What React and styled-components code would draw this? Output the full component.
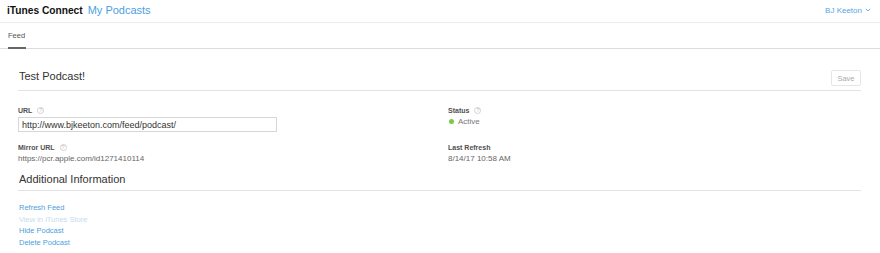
import React from "react";
import styled, { createGlobalStyle } from "styled-components";

const Global = createGlobalStyle`
  html, body { margin: 0; padding: 0; background: #fff; }
  body { font-family: "Liberation Sans", Arial, sans-serif; color: #333; }
  * { box-sizing: border-box; }
`;

const Header = styled.header`
  height: 23px;
  display: flex;
  align-items: center;
  justify-content: space-between;
  padding: 0 9px 2px 7px;
  border-bottom: 1px solid #ececec;
`;

const Brand = styled.div`
  display: flex;
  align-items: baseline;
  gap: 5px;
`;

const BrandName = styled.span`
  font-size: 10.2px;
  font-weight: bold;
  color: #111;
`;

const BrandSection = styled.span`
  font-size: 11px;
  color: #4c9fe0;
`;

const UserMenu = styled.div`
  font-size: 8px;
  color: #5aa4e2;
  display: flex;
  align-items: center;
  gap: 3px;
`;

const Tabs = styled.nav`
  height: 26px;
  display: flex;
  align-items: stretch;
  padding-left: 8px;
  border-bottom: 1px solid #dcdcdc;
`;

const Tab = styled.div`
  font-size: 7.5px;
  color: #555;
  display: flex;
  align-items: center;
  padding: 0 1px 0 0;
  border-bottom: ${(p) => (p.$active ? "2px solid #666" : "none")};
  margin-bottom: -1px;
`;

const Main = styled.main`
  padding: 20px 19px 0 18px;
`;

const SectionHead = styled.div`
  display: flex;
  align-items: flex-end;
  justify-content: space-between;
  border-bottom: 1px solid #e3e3e3;
  height: 22px;
  padding: 0 0 ${(p) => p.$pb}px 1px;
`;

const Title = styled.h2`
  margin: 0;
  font-weight: normal;
  font-size: 11px;
  line-height: 13px;
  color: #333;
`;

const SaveButton = styled.button`
  font-family: inherit;
  font-size: 7.5px;
  color: #aaa;
  background: #fff;
  border: 1px solid #e6e6e6;
  border-radius: 2px;
  width: 30px;
  height: 16px;
  padding: 0;
  align-self: flex-start;
  margin-top: 1px;
`;

const Grid = styled.div`
  display: grid;
  grid-template-columns: 430px 1fr;
  padding-top: 14px;
`;

const Field = styled.div`
  display: flex;
  flex-direction: column;
  height: ${(p) => p.$h}px;
`;

const Label = styled.div`
  font-size: 7px;
  font-weight: bold;
  color: #505050;
  display: flex;
  align-items: center;
  gap: 5px;
  height: 10px;
`;

const Help = styled.span`
  width: 7px;
  height: 7px;
  border-radius: 50%;
  border: 1px solid #d2d2d2;
  color: #bbb;
  font-size: 5px;
  font-weight: normal;
  display: inline-flex;
  align-items: center;
  justify-content: center;
`;

const Input = styled.div`
  width: 259px;
  height: 15px;
  margin-top: 2px;
  border: 1px solid #d6d6d6;
  font-size: 9px;
  color: #333;
  display: flex;
  align-items: center;
  padding-left: 3px;
`;

const Value = styled.div`
  font-size: 8px;
  color: ${(p) => p.$color || "#666"};
  margin-top: 2px;
  display: flex;
  align-items: center;
  gap: 4px;
`;

const Dot = styled.span`
  width: 5px;
  height: 5px;
  border-radius: 50%;
  background: #7ac943;
  margin-left: 1px;
`;

const Links = styled.ul`
  list-style: none;
  margin: 0;
  padding: 11px 0 0 1px;
`;

const LinkItem = styled.li`
  font-size: 7.5px;
  line-height: 11.7px;
  color: ${(p) => (p.$disabled ? "#c5dcf0" : "#4c9fe0")};
`;

export default function App() {
  return (
    <>
      <Global />
      <Header>
        <Brand>
          <BrandName>iTunes Connect</BrandName>
          <BrandSection>My Podcasts</BrandSection>
        </Brand>
        <UserMenu>
          BJ Keeton
          <svg width="6" height="4" viewBox="0 0 6 4">
            <path d="M0.8 0.8 L3 3 L5.2 0.8" fill="none" stroke="#5aa4e2" strokeWidth="0.9" />
          </svg>
        </UserMenu>
      </Header>
      <Tabs>
        <Tab $active>Feed</Tab>
      </Tabs>
      <Main>
        <SectionHead $pb={7}>
          <Title>Test Podcast!</Title>
          <SaveButton>Save</SaveButton>
        </SectionHead>
        <Grid>
          <div>
            <Field $h={37}>
              <Label>URL <Help>?</Help></Label>
              <Input>http://www.bjkeeton.com/feed/podcast/</Input>
            </Field>
            <Field $h={27}>
              <Label>Mirror URL <Help>?</Help></Label>
              <Value>https://pcr.apple.com/id1271410114</Value>
            </Field>
          </div>
          <div>
            <Field $h={37}>
              <Label>Status <Help>?</Help></Label>
              <Value $color="#777"><Dot />Active</Value>
            </Field>
            <Field $h={27}>
              <Label>Last Refresh</Label>
              <Value>8/14/17 10:58 AM</Value>
            </Field>
          </div>
        </Grid>
        <SectionHead $pb={4}>
          <Title>Additional Information</Title>
        </SectionHead>
        <Links>
          <LinkItem>Refresh Feed</LinkItem>
          <LinkItem $disabled>View in iTunes Store</LinkItem>
          <LinkItem>Hide Podcast</LinkItem>
          <LinkItem>Delete Podcast</LinkItem>
        </Links>
      </Main>
    </>
  );
}
